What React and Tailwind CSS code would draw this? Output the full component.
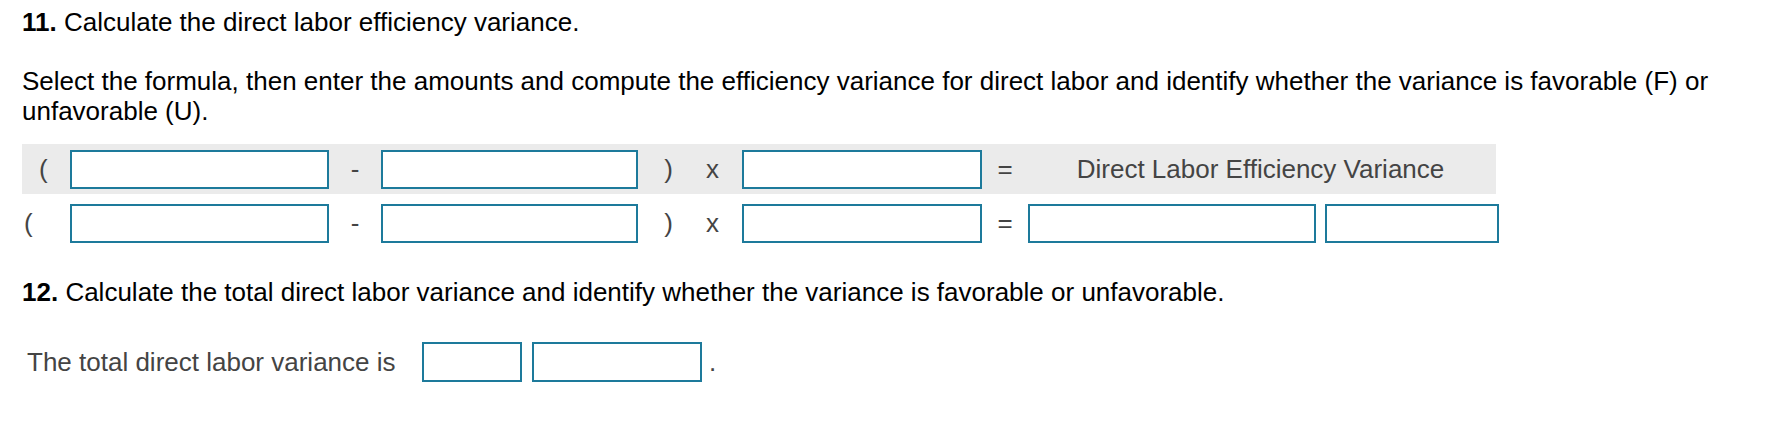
const FONT = { fontFamily: '"Liberation Sans", Arial, sans-serif' };

function Box({ w }) {
  return <div className={`${w} h-[39px] shrink-0 border-2 border-[#1d7a9b] bg-white`} />;
}

function Sym({ w, children, cls = 'justify-center' }) {
  return (
    <div className={`${w} ${cls} shrink-0 flex items-center text-[#444] text-[26px]`}>
      {children}
    </div>
  );
}

export default function App() {
  return (
    <div className="w-[1776px] h-[432px] bg-white pl-[22px] pt-[7px]" style={FONT}>
      {/* question 11 */}
      <p className="text-[26px] leading-[30px] text-black">
        <span className="font-bold">11.</span> Calculate the direct labor efficiency variance.
      </p>
      <p className="mt-[30px] text-[26px] leading-[29.5px] text-black w-[1710px]">
        Select the formula, then enter the amounts and compute the efficiency variance for direct labor and identify whether the variance is favorable (F) or unfavorable (U).
      </p>

      {/* formula header row */}
      <div className="mt-[18px] w-[1474px] h-[50px] bg-[#ebebeb] flex items-center">
        <Sym w="w-[48px]" cls="justify-start pl-[17px]">(</Sym>
        <Box w="w-[259px]" />
        <Sym w="w-[52px]">-</Sym>
        <Box w="w-[257px]" />
        <Sym w="w-[61px]">)</Sym>
        <Sym w="w-[43px]" cls="justify-start pl-[7px]">x</Sym>
        <Box w="w-[240px]" />
        <Sym w="w-[46px]">=</Sym>
        <div className="w-[465px] shrink-0 text-center text-[#444] text-[26px]">
          Direct Labor Efficiency Variance
        </div>
      </div>

      {/* formula input row */}
      <div className="mt-[4px] h-[50px] flex items-center">
        <Sym w="w-[48px]" cls="justify-start pl-[2px]">(</Sym>
        <Box w="w-[259px]" />
        <Sym w="w-[52px]">-</Sym>
        <Box w="w-[257px]" />
        <Sym w="w-[61px]">)</Sym>
        <Sym w="w-[43px]" cls="justify-start pl-[7px]">x</Sym>
        <Box w="w-[240px]" />
        <Sym w="w-[46px]">=</Sym>
        <Box w="w-[288px]" />
        <div className="w-[9px] shrink-0" />
        <Box w="w-[174px]" />
      </div>

      {/* question 12 */}
      <p className="mt-[29px] text-[26px] leading-[30px] text-black">
        <span className="font-bold">12.</span> Calculate the total direct labor variance and identify whether the variance is favorable or unfavorable.
      </p>
      <div className="mt-[35px] h-[40px] flex items-center pl-[5px] text-[26px] text-[#444]">
        <span className="w-[395px] shrink-0">The total direct labor variance is</span>
        <div className="w-[100px] h-[40px] shrink-0 border-2 border-[#1d7a9b]" />
        <div className="w-[10px] shrink-0" />
        <div className="w-[170px] h-[40px] shrink-0 border-2 border-[#1d7a9b]" />
        <span className="ml-[7px]">.</span>
      </div>
    </div>
  );
}
